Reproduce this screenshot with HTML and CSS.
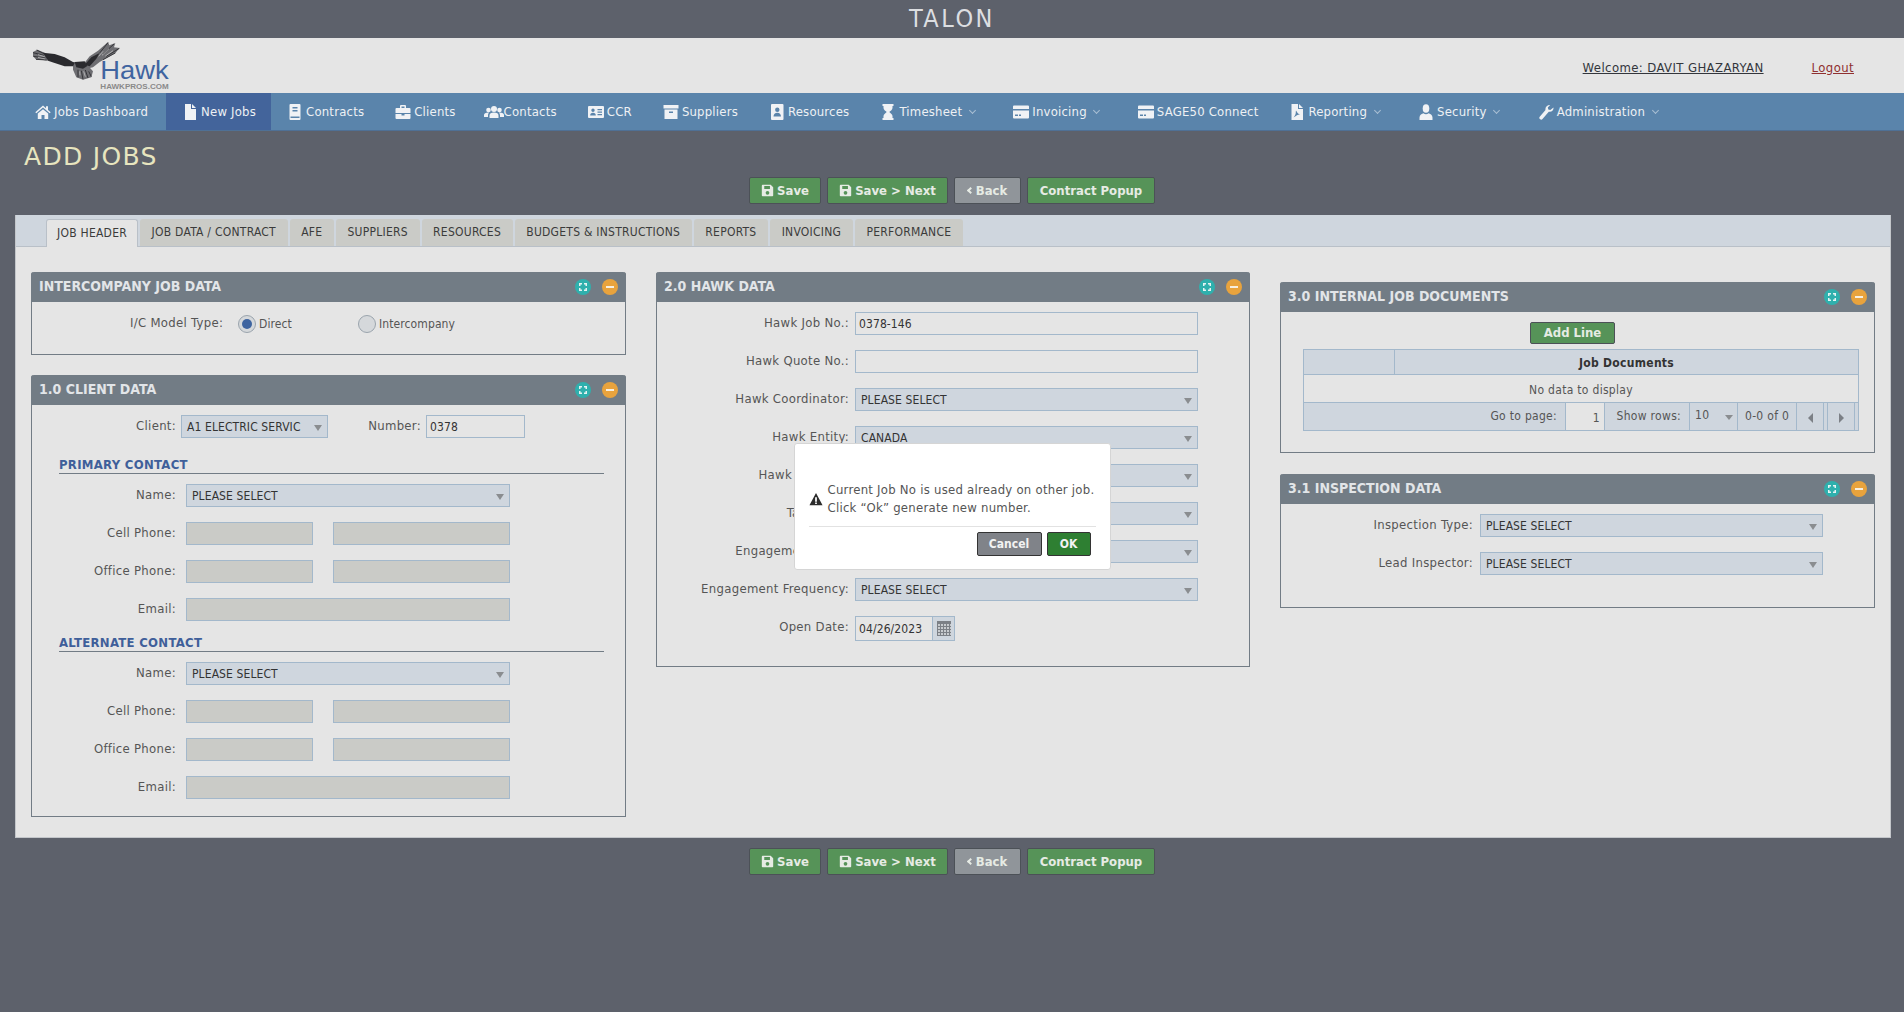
FILE: index.html
```html
<!DOCTYPE html>
<html lang="en">
<head>
<meta charset="utf-8">
<title>TALON - Add Jobs</title>
<link rel="stylesheet" href="styles.css">
</head>
<body>
<svg class="defs" aria-hidden="true">
  <symbol id="i-home" viewBox="0 0 16 16"><path d="M8 1.5.3 8.2l1 1.1L8 3.6l6.7 5.7 1-1.1L13 5.9V2.2h-2v2zM2.8 9.6V15h3.7v-4h3v4h3.7V9.6L8 5.2z"/></symbol>
  <symbol id="i-file" viewBox="0 0 16 16"><path d="M3 0h6v5h5v11H3zM10 0l4 4h-4z"/></symbol>
  <symbol id="i-book" viewBox="0 0 16 16"><path fill-rule="evenodd" d="M3.500 0h9a1 1 0 011 1v14a1 1 0 01-1 1h-9a1 1 0 01-1-1V1a1 1 0 011-1zM5.500 3v1.400h5V3zM5.500 6v1.400h5V6zM3.500 12.500V14h9v-1.500z"/></symbol>
  <symbol id="i-case" viewBox="0 0 16 16"><path fill-rule="evenodd" d="M6 1h4a1 1 0 011 1v2h3.500a1 1 0 011 1v4H.5V5a1 1 0 011-1H5V2a1 1 0 011-1zM6.500 2.500V4h3V2.500zM.5 10h6v1.500h3V10h6v4a1 1 0 01-1 1h-13a1 1 0 01-1-1z"/></symbol>
  <symbol id="i-users" viewBox="0 0 20 16"><circle cx="10" cy="5" r="3"/><circle cx="4.500" cy="6" r="2.300"/><circle cx="15.500" cy="6" r="2.300"/><path d="M5.500 14v-2.500C5.500 9.500 7 8.500 10 8.500s4.500 1 4.500 3V14zM0 13v-2c0-1.500 1.500-2.500 4.500-2.500.3 0 .5 0 .7.100C4.500 9.300 4 10.300 4 11.500V13zM20 13v-2c0-1.500-1.500-2.500-4.500-2.500-.3 0-.5 0-.7.100.7.700 1.200 1.700 1.200 2.900V13z"/></symbol>
  <symbol id="i-id" viewBox="0 0 16 16"><path fill-rule="evenodd" d="M1 2h14a1 1 0 011 1v10a1 1 0 01-1 1H1a1 1 0 01-1-1V3a1 1 0 011-1zM5 4.500a1.700 1.700 0 100 3.400 1.700 1.700 0 000-3.400zM2.200 11.500h5.600c0-1.700-1-2.700-2.800-2.700s-2.800 1-2.800 2.700zM9.500 5v1.300h4.500V5zM9.500 7.500v1.300h4.500V7.500zM9.500 10v1.300h4.500V10z"/></symbol>
  <symbol id="i-box" viewBox="0 0 16 16"><path fill-rule="evenodd" d="M.5 1h15v3.500H.5zM1.500 5.500h13V15h-13zM6 7.500V9h4V7.500z"/></symbol>
  <symbol id="i-contact" viewBox="0 0 16 16"><path fill-rule="evenodd" d="M3 0h10.500a1 1 0 011 1v14a1 1 0 01-1 1H3a1 1 0 01-1-1V1a1 1 0 011-1zM8.300 3.500a2.200 2.200 0 100 4.400 2.200 2.200 0 000-4.400zM4.500 12.500h7.500c0-2.200-1.500-3.700-3.700-3.700s-3.800 1.500-3.800 3.700z"/></symbol>
  <symbol id="i-glass" viewBox="0 0 16 16"><path d="M2.500 0h11v2h-1v2c0 2-2.500 3-3.200 4 .7 1 3.200 2 3.200 4v2h1v2h-11v-2h1v-2c0-2 2.500-3 3.200-4-.7-1-3.200-2-3.200-4V2h-1z"/></symbol>
  <symbol id="i-card" viewBox="0 0 16 16"><path fill-rule="evenodd" d="M1 1.500h14a1 1 0 011 1v2.500H0V2.500a1 1 0 011-1zM0 6.500h16v7a1 1 0 01-1 1H1a1 1 0 01-1-1zM2 10.500V12h3v-1.500zM6 10.500V12h2v-1.500z"/></symbol>
  <symbol id="i-pdf" viewBox="0 0 16 16"><path fill-rule="evenodd" d="M2.500 0H9v5h5v11H2.500zM10 0l4 4h-4zM7 6.500c-.6 1.800.8 3.200-2.500 7 2.500-1.500 3.500-3 6.500-3-2.500-1-3-2.500-4-4z"/></symbol>
  <symbol id="i-user" viewBox="0 0 16 16"><ellipse cx="8" cy="4.500" rx="3.300" ry="4.300"/><path d="M1.500 16v-2.500c0-2.500 2.500-3.700 4-4.200.7.700 1.500 1 2.500 1s1.800-.3 2.500-1c1.500.5 4 1.700 4 4.200V16z"/></symbol>
  <symbol id="i-wrench" viewBox="0 0 16 16"><path d="M15.500 3.500c.3 2.600-2 4.900-4.700 4.200L4.500 15a1.800 1.800 0 01-3-1.900l6-7C6.900 3.300 9 .8 12.200.9L9.800 3.600l.5 2 2 .5z"/></symbol>
  <symbol id="i-save" viewBox="0 0 16 16"><path fill-rule="evenodd" d="M2 1h10l3 3v10a1 1 0 01-1 1H2a1 1 0 01-1-1V2a1 1 0 011-1zM4 2.500V6h7V2.500zM8 8.500a2.300 2.300 0 100 4.600 2.300 2.300 0 000-4.600z"/></symbol>
  <symbol id="i-expand" viewBox="0 0 16 16"><path d="M4 4h3v1.500H5.500V7H4zM9 4h3v3h-1.500V5.500H9zM4 9h1.500v1.500H7V12H4zM10.500 9H12v3H9v-1.500h1.500z"/></symbol>
</svg>

<div class="topbar">TALON</div>

<header class="brand">
  <svg class="logo" viewBox="0 0 450 165" aria-label="Hawk logo">
    <g transform="translate(6 0)">
      <path class="eagle-mid" d="M165 80 185 55 210 38 240 12 244 22 262 15 258 28 275 30 262 45 240 58 215 72 195 88 175 92z"/>
      <path class="eagle-mid" d="M135 72 170 72 195 100 190 118 165 125 145 118 135 95z"/>
      <path class="eagle-mid" d="M15 42 28 35 50 44 60 68 45 66 25 65 15 55z"/>
      <path class="eagle-dark" d="M45 44 80 48 110 58 140 75 135 85 110 85 80 75 60 68z"/>
      <path class="eagle-dark" d="M170 80 190 58 215 45 205 62 185 85z"/>
      <path class="eagle-dark" d="M140 72 170 70 178 84 165 92 145 88z"/>
      <path class="eagle-line" d="M15 44 48 52M26 36 50 48M16 55 52 60M24 64 56 66M240 14 215 45M258 18 225 48M274 31 235 55M262 45 225 65M150 95 150 118M160 98 165 124M172 96 180 120M182 100 190 116"/>
      <path class="eagle-light" d="M30 50 50 56M30 58 52 63M225 40 212 55M243 32 222 52M255 38 232 54M155 100 156 112M167 100 172 116"/>
    </g>
    <text class="logo-word" x="223" y="122" textLength="205" lengthAdjust="spacingAndGlyphs">Hawk</text>
    <text class="logo-url" x="223" y="152" textLength="205" lengthAdjust="spacingAndGlyphs">HAWKPROS.COM</text>
  </svg>
  <div class="userlinks">
    <a class="welcome">Welcome: DAVIT GHAZARYAN</a>
    <a class="logout">Logout</a>
  </div>
</header>

<nav class="mainnav">
  <a class="navitem n-first"><svg class="ico"><use href="#i-home"/></svg><span>Jobs Dashboard</span></a>
  <a class="navitem active"><svg class="ico"><use href="#i-file"/></svg><span>New Jobs</span></a>
  <a class="navitem"><svg class="ico"><use href="#i-book"/></svg><span>Contracts</span></a>
  <a class="navitem n-clients"><svg class="ico"><use href="#i-case"/></svg><span>Clients</span></a>
  <a class="navitem"><svg class="ico wide"><use href="#i-users"/></svg><span>Contacts</span></a>
  <a class="navitem"><svg class="ico"><use href="#i-id"/></svg><span>CCR</span></a>
  <a class="navitem"><svg class="ico"><use href="#i-box"/></svg><span>Suppliers</span></a>
  <a class="navitem"><svg class="ico"><use href="#i-contact"/></svg><span>Resources</span></a>
  <a class="navitem"><svg class="ico"><use href="#i-glass"/></svg><span>Timesheet</span><i class="chev"></i></a>
  <a class="navitem"><svg class="ico"><use href="#i-card"/></svg><span>Invoicing</span><i class="chev"></i></a>
  <a class="navitem"><svg class="ico"><use href="#i-card"/></svg><span>SAGE50 Connect</span></a>
  <a class="navitem"><svg class="ico"><use href="#i-pdf"/></svg><span>Reporting</span><i class="chev"></i></a>
  <a class="navitem"><svg class="ico"><use href="#i-user"/></svg><span>Security</span><i class="chev"></i></a>
  <a class="navitem"><svg class="ico"><use href="#i-wrench"/></svg><span>Administration</span><i class="chev"></i></a>
</nav>

<h1 class="pagetitle">ADD JOBS</h1>

<div class="actions">
  <button class="btn green w-save"><svg class="btnico"><use href="#i-save"/></svg>Save</button>
  <button class="btn green w-next"><svg class="btnico"><use href="#i-save"/></svg>Save &gt; Next</button>
  <button class="btn grey w-back"><i class="back"></i>Back</button>
  <button class="btn green w-popup">Contract Popup</button>
</div>

<main class="sheet">
  <div class="tabs">
    <a class="tab current">JOB HEADER</a>
    <a class="tab">JOB DATA / CONTRACT</a>
    <a class="tab">AFE</a>
    <a class="tab">SUPPLIERS</a>
    <a class="tab">RESOURCES</a>
    <a class="tab">BUDGETS &amp; INSTRUCTIONS</a>
    <a class="tab">REPORTS</a>
    <a class="tab">INVOICING</a>
    <a class="tab">PERFORMANCE</a>
  </div>

  <div class="columns">
    <div class="col">
      <section class="panel p-ic">
        <div class="phead"><h2>INTERCOMPANY JOB DATA</h2><span class="dot teal"><svg><use href="#i-expand"/></svg></span><span class="dot orange"><i></i></span></div>
        <div class="icrow">
          <span class="iclabel">I/C Model Type:</span>
          <span class="radio on"></span><span class="rtext rdirect">Direct</span>
          <span class="radio"></span><span class="rtext">Intercompany</span>
        </div>
      </section>

      <section class="panel p-client">
        <div class="phead"><h2>1.0 CLIENT DATA</h2><span class="dot teal"><svg><use href="#i-expand"/></svg></span><span class="dot orange"><i></i></span></div>
        <div class="pbody">
          <div class="row">
            <label class="lbl l-client">Client:</label>
            <div class="select f-client">A1 ELECTRIC SERVIC</div>
            <label class="lbl l-number">Number:</label>
            <div class="input f-number">0378</div>
          </div>
          <div class="contact first">
            <h3 class="subhead">PRIMARY CONTACT</h3>
            <div class="row"><label class="lbl">Name:</label><div class="select f-full">PLEASE SELECT</div></div>
            <div class="row"><label class="lbl">Cell Phone:</label><div class="input off f-a"></div><div class="input off f-b"></div></div>
            <div class="row"><label class="lbl">Office Phone:</label><div class="input off f-a"></div><div class="input off f-b"></div></div>
            <div class="row"><label class="lbl">Email:</label><div class="input off f-full"></div></div>
          </div>
          <div class="contact">
            <h3 class="subhead">ALTERNATE CONTACT</h3>
            <div class="row"><label class="lbl">Name:</label><div class="select f-full">PLEASE SELECT</div></div>
            <div class="row"><label class="lbl">Cell Phone:</label><div class="input off f-a"></div><div class="input off f-b"></div></div>
            <div class="row"><label class="lbl">Office Phone:</label><div class="input off f-a"></div><div class="input off f-b"></div></div>
            <div class="row"><label class="lbl">Email:</label><div class="input off f-full"></div></div>
          </div>
        </div>
      </section>
    </div>

    <div class="col">
      <section class="panel wide-form p-hawk">
        <div class="phead"><h2>2.0 HAWK DATA</h2><span class="dot teal"><svg><use href="#i-expand"/></svg></span><span class="dot orange"><i></i></span></div>
        <div class="pbody">
          <div class="row"><label class="lbl">Hawk Job No.:</label><div class="input f-wide">0378-146</div></div>
          <div class="row"><label class="lbl">Hawk Quote No.:</label><div class="input f-wide"></div></div>
          <div class="row"><label class="lbl">Hawk Coordinator:</label><div class="select f-wide">PLEASE SELECT</div></div>
          <div class="row"><label class="lbl">Hawk Entity:</label><div class="select f-wide">CANADA</div></div>
          <div class="row"><label class="lbl">Hawk Division:</label><div class="select f-wide"></div></div>
          <div class="row"><label class="lbl">Task Type:</label><div class="select f-wide"></div></div>
          <div class="row"><label class="lbl">Engagement Type:</label><div class="select f-wide"></div></div>
          <div class="row"><label class="lbl">Engagement Frequency:</label><div class="select f-wide">PLEASE SELECT</div></div>
          <div class="row"><label class="lbl">Open Date:</label>
            <div class="datefield"><span class="datetext">04/26/2023</span><span class="datebtn"><span class="cal"></span></span></div>
          </div>
        </div>
      </section>
    </div>

    <div class="col col-right">
      <section class="panel p-docs">
        <div class="phead"><h2>3.0 INTERNAL JOB DOCUMENTS</h2><span class="dot teal"><svg><use href="#i-expand"/></svg></span><span class="dot orange"><i></i></span></div>
        <div class="docs">
          <button class="btn green addline">Add Line</button>
          <div class="grid">
            <div class="ghead"><span class="gfirst"></span><span class="gtitle">Job Documents</span></div>
            <div class="gempty">No data to display</div>
            <div class="pager">
              <span class="pg pg-go">Go to page:</span>
              <span class="pg pg-page">1</span>
              <span class="pg pg-rows">Show rows:</span>
              <span class="pg pg-sel">10</span>
              <span class="pg pg-count">0-0 of 0</span>
              <span class="pg pg-nav"><i class="tri left"></i></span>
              <span class="pg pg-gap"></span>
              <span class="pg pg-nav"><i class="tri right"></i></span>
              <span class="pg pg-gap last"></span>
            </div>
          </div>
        </div>
      </section>

      <section class="panel wide-form p-insp">
        <div class="phead"><h2>3.1 INSPECTION DATA</h2><span class="dot teal"><svg><use href="#i-expand"/></svg></span><span class="dot orange"><i></i></span></div>
        <div class="pbody">
          <div class="row"><label class="lbl">Inspection Type:</label><div class="select f-wide">PLEASE SELECT</div></div>
          <div class="row"><label class="lbl">Lead Inspector:</label><div class="select f-wide">PLEASE SELECT</div></div>
        </div>
      </section>
    </div>
  </div>
</main>

<div class="actions lower">
  <button class="btn green w-save"><svg class="btnico"><use href="#i-save"/></svg>Save</button>
  <button class="btn green w-next"><svg class="btnico"><use href="#i-save"/></svg>Save &gt; Next</button>
  <button class="btn grey w-back"><i class="back"></i>Back</button>
  <button class="btn green w-popup">Contract Popup</button>
</div>

<div class="overlay">
  <div class="dialog" role="dialog">
    <div class="dmsg">
      <svg class="warn" viewBox="0 0 16 16"><path fill-rule="evenodd" d="M8 1l7.500 14H.5zM7 6v5h2V6zM7 12v1.800h2V12z"/></svg>
      <p>Current Job No is used already on other job.<br>Click “Ok” generate new number.</p>
    </div>
    <div class="dbtns">
      <button class="dbtn cancel">Cancel</button>
      <button class="dbtn ok">OK</button>
    </div>
  </div>
</div>
</body>
</html>
```

FILE: styles.css
```css
* { box-sizing: border-box; }
html, body { margin: 0; padding: 0; }
body {
  min-height: 1012px;
  background: #5d616b;
  font-family: "DejaVu Sans Condensed", "DejaVu Sans", sans-serif;
  font-stretch: condensed;
  font-size: 13px;
  letter-spacing: .3px;
  color: #555;
}
.defs { position: absolute; width: 0; height: 0; }

.topbar {
  height: 38px;
  text-align: center;
  line-height: 38px;
  font-size: 25px;
  letter-spacing: 2.500px;
  color: #dcdee1;
}

.brand {
  height: 55px;
  background: #e5e5e5;
  display: flex;
  align-items: flex-start;
  justify-content: space-between;
}
.logo { width: 150px; height: 55px; margin-left: 26px; }
.eagle-dark { fill: #2a2a2e; }
.eagle-mid { fill: #6e6e72; }
.eagle-line { fill: none; stroke: #2a2a2e; stroke-width: 2.500; }
.eagle-light { fill: none; stroke: #d0d0d0; stroke-width: 2; }
.logo-word { font-family: "Liberation Sans", sans-serif; font-size: 76px; fill: #3f64a0; letter-spacing: 0; }
.logo-url { font-family: "Liberation Sans", sans-serif; font-size: 24px; font-weight: 700; fill: #8a8a8a; letter-spacing: 0; }
.userlinks { display: flex; gap: 48px; margin: 22px 50px 0 0; font-size: 13px; letter-spacing: .4px; line-height: 16px; }
.welcome { color: #33363c; text-decoration: underline; }
.logout { color: #8f3030; text-decoration: underline; }

.mainnav {
  height: 38px;
  background: #5a84ab;
  border-bottom: 1px solid #4f7095;
  display: flex;
  padding-left: 19px;
  color: #eef1f4;
  font-size: 13px;
  letter-spacing: .2px;
}
.navitem { display: flex; align-items: center; padding: 0 15px 0 16px; height: 37px; }
.navitem.n-first { padding-right: 18px; }
.navitem.n-clients { padding-right: 12px; }
.navitem.active { background: #43649b; }
.ico { width: 16px; height: 16px; fill: #f0f2f5; margin-right: 3px; flex: none; }
.ico.wide { width: 20px; margin-right: 0; }
.chev {
  width: 5px; height: 5px; margin: -2px 7.500px 0 7.500px;
  border-right: 1.500px solid #a9bfd3; border-bottom: 1.500px solid #a9bfd3;
  transform: rotate(45deg);
}

.pagetitle {
  margin: 0;
  height: 46px;
  padding: 11px 0 0 24px;
  font-size: 25px;
  font-stretch: normal;
  font-family: "DejaVu Sans", sans-serif;
  letter-spacing: 1.300px;
  line-height: 30px;
  font-weight: 400;
  color: #e7e5bf;
}

.actions {
  display: flex;
  gap: 6px;
  height: 27px;
  padding-left: 749px;
}
.actions.lower { margin-top: 10px; }
.btn {
  font: 700 13px "DejaVu Sans Condensed", "DejaVu Sans", sans-serif;
  font-stretch: condensed;
  height: 27px;
  padding: 0;
  border: 1px solid #4c5157;
  border-radius: 2px;
  color: #e6ebe4;
  display: inline-flex;
  align-items: center;
  justify-content: center;
}
.w-save { width: 72px; }
.w-next { width: 121px; }
.w-back { width: 67px; }
.w-popup { width: 128px; }
.green { background: #569358; }
.grey { background: #90959a; }
.btnico { width: 13px; height: 13px; fill: #e6ebe4; margin-right: 3px; }
.back {
  width: 5px; height: 5px; margin-right: 3px;
  border-left: 2px solid #e6ebe4; border-bottom: 2px solid #e6ebe4;
  transform: rotate(45deg);
}

.sheet {
  margin: 11px 13px 0 15px;
  background: #e5e5e5;
  border: 1px solid #c3c6ca;
  border-top: 0;
}
.tabs {
  height: 32px;
  padding: 4px 0 0 30px;
  background: #cfd6de;
  border-bottom: 1px solid #b9c0c8;
  display: flex;
  gap: 2px;
}
.tab {
  height: 27px;
  line-height: 26px;
  padding: 0 11.600px;
  font-size: 12px;
  letter-spacing: .25px;
  color: #3b3b3b;
  background: #cacbc7;
  border-radius: 3px 3px 0 0;
}
.tab.current { background: #e5e5e5; height: 28px; border: 1px solid #b9c0c8; border-bottom: 0; padding: 0 10px; }

.columns {
  display: grid;
  grid-template-columns: 595px 594px 595px;
  gap: 30px;
  padding: 25px 0 20px 15px;
  align-items: start;
}
.col-right { padding-top: 10px; }

.panel {
  border: 1px solid #727c85;
  border-top: 0;
  border-radius: 3px 3px 0 0;
}
.phead {
  height: 30px;
  margin: 0 -1px;
  background: #727c85;
  border-radius: 3px 3px 0 0;
  display: flex;
  align-items: center;
  padding: 0 8px;
}
.phead h2 {
  flex: 1;
  margin: -2px 0 0;
  font-size: 14px;
  letter-spacing: 0;
  font-weight: 700;
  color: #e2e5e8;
}
.dot {
  width: 16px; height: 16px; border-radius: 50%;
  display: flex; align-items: center; justify-content: center;
  margin-left: 11px;
}
.dot svg { width: 16px; height: 16px; fill: #e5f3f3; }
.teal { background: #2fb0ad; }
.orange { background: #e8a33d; }
.orange i { width: 8px; height: 2px; background: #f7efe0; }

.p-ic { height: 83px; margin-bottom: 20px; }
.icrow { display: flex; align-items: center; height: 52px; padding: 0 0 8px 98px; }
.iclabel { width: 108px; margin-top: -3px; white-space: nowrap; }
.radio {
  width: 18px; height: 18px; border-radius: 50%;
  background: #d5d8db; border: 1px solid #9aa4ad;
  display: flex; align-items: center; justify-content: center;
  margin-right: 3px;
}
.radio.on::before { content: ""; width: 10px; height: 10px; border-radius: 50%; background: #3e64a0; }
.rtext { font-size: 12px; letter-spacing: .1px; }
.rdirect { width: 99px; }

.pbody { padding: 10px 0 17px 0; }
.row { display: flex; min-height: 23px; }
.row + .row { margin-top: 15px; }
.lbl { width: 144px; margin-right: 10px; text-align: right; line-height: 21px; flex: none; }
.select, .input {
  height: 23px;
  line-height: 23px;
  border: 1px solid #a3b8cb;
  font-size: 12px;
  letter-spacing: .1px;
  color: #333;
  flex: none;
}
.select { position: relative; background: #cfd6de; padding-left: 5px; }
.select::after {
  content: ""; position: absolute; right: 5px; top: 9px;
  border-left: 4px solid transparent; border-right: 4px solid transparent;
  border-top: 6px solid #8a8d90;
}
.input { background: #e5e5e5; padding-left: 3px; }
.input.off { background: #cacbc7; }
.f-full { width: 324px; }
.f-a { width: 127px; margin-right: 20px; }
.f-b { width: 177px; }
.f-client { width: 147px; }
.f-number { width: 99px; }
.lbl.l-client { margin-right: 5px; }
.lbl.l-number { width: 93px; margin-right: 5px; }
.contact { margin: 12px 21px 0 27px; }
.contact.first { margin-top: 17px; }
.subhead {
  margin: 0 0 10px;
  height: 19px;
  font-size: 13px;
  line-height: 19px;
  font-weight: 700;
  color: #3f5f9a;
  border-bottom: 1px solid #727c85;
}
.contact .lbl { width: 117px; }

.wide-form .lbl { width: 192px; margin-right: 6px; }
.p-insp.wide-form .lbl { margin-right: 7px; }
.f-wide { width: 343px; }
.p-hawk .pbody { padding-bottom: 25px; }
.datefield {
  width: 100px; height: 25px; flex: none;
  display: flex;
  border: 1px solid #a3b8cb;
  font-size: 12px; letter-spacing: .1px; color: #333;
}
.datetext { width: 77px; line-height: 25px; padding-left: 3px; border-right: 1px solid #a3b8cb; }
.datebtn { flex: 1; display: flex; align-items: center; justify-content: center; background: #cfd6de; }
.cal {
  width: 14px; height: 15px;
  border-top: 3px solid #7c8086;
  background:
    repeating-linear-gradient(90deg, #7c8086 0 1px, transparent 1px 3px),
    repeating-linear-gradient(0deg, #7c8086 0 1px, #c8cbce 1px 3px);
}

.p-docs { height: 171px; margin-bottom: 21px; }
.docs { padding: 10px 15px 0 22px; }
.addline { display: flex; justify-content: center; width: 85px; height: 22px; margin-left: 227px; padding-bottom: 2px; }
.grid { margin-top: 5px; border: 1px solid #a3b8cb; width: 556px; }
.ghead { display: flex; height: 25px; background: #cfd6de; border-bottom: 1px solid #a3b8cb; font-size: 12px; font-weight: 700; color: #333; line-height: 26px; }
.gfirst { width: 91px; border-right: 1px solid #a3b8cb; }
.gtitle { flex: 1; text-align: center; }
.gempty { height: 28px; background: #e5e5e5; text-align: center; line-height: 30px; font-size: 12px; border-bottom: 1px solid #a3b8cb; }
.pager { display: flex; height: 27px; background: #cfd6de; font-size: 12px; line-height: 26px; }
.pg { flex: none; border-left: 1px solid #a3b8cb; position: relative; }
.pg-go { flex: 1; border-left: 0; text-align: right; padding-right: 8px; }
.pg-page { width: 39px; background: #e5e5e5; text-align: right; padding-right: 4px; line-height: 30px; }
.pg-rows { width: 85px; text-align: right; padding-right: 8px; }
.pg-sel { width: 48px; padding-left: 5px; line-height: 24px; }
.pg-sel::after {
  content: ""; position: absolute; right: 4px; top: 12px;
  border-left: 4px solid transparent; border-right: 4px solid transparent;
  border-top: 5px solid #8a8d90;
}
.pg-count { width: 59px; padding-left: 7px; white-space: nowrap; }
.pg-nav { width: 27px; display: flex; align-items: center; justify-content: center; }
.pg-gap { width: 4px; }
.tri { width: 0; height: 0; border-top: 5px solid transparent; border-bottom: 5px solid transparent; margin-top: 2px; }
.tri.left { border-right: 5px solid #7c8086; }
.tri.right { border-left: 5px solid #7c8086; }

.p-insp { height: 134px; }

.overlay {
  position: fixed; inset: 0;
  display: flex; align-items: center; justify-content: center;
}
.dialog {
  width: 317px; height: 127px;
  background: #fff;
  border: 1px solid #d5d5d5;
  border-radius: 3px;
  padding: 32px 14px 0 14px;
}
.dmsg {
  display: flex; align-items: center;
  height: 51px;
  border-bottom: 1px solid #e2e2e2;
  padding-bottom: 4px;
}
.warn { width: 14px; height: 14px; fill: #2c2c2c; margin-right: 5px; flex: none; }
.dmsg p { margin: 0; line-height: 18px; font-size: 13px; letter-spacing: .25px; color: #555; white-space: nowrap; }
.dbtns { display: flex; justify-content: flex-end; gap: 5px; margin-top: 5px; padding-right: 5px; }
.dbtn {
  font: 700 12px "DejaVu Sans Condensed", "DejaVu Sans", sans-serif;
  font-stretch: condensed;
  height: 24px;
  border: 1px solid #333;
  border-radius: 2px;
  color: #f2f2f2;
  padding: 0;
}
.cancel { width: 65px; background: #808389; }
.ok { width: 44px; background: #2e7f32; }
```
